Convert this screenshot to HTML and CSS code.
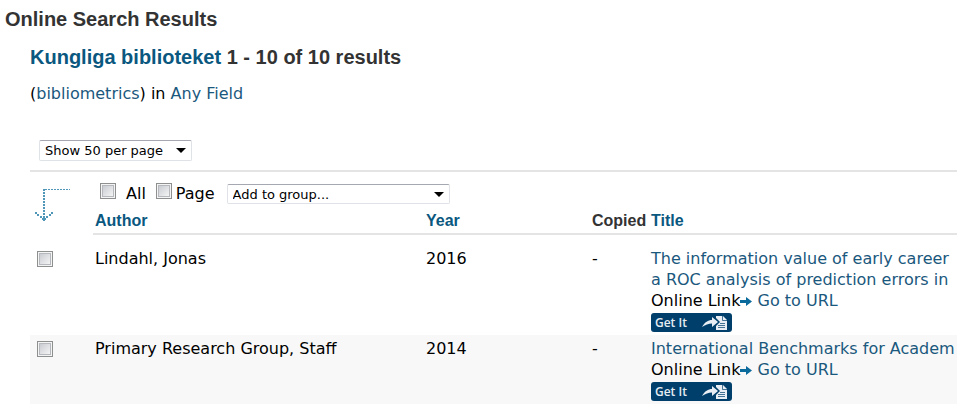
FILE: index.html
```html
<!DOCTYPE html>
<html lang="en">
<head>
    <meta charset="UTF-8">
    <meta name="viewport" content="width=device-width, initial-scale=1.0">
    <title>Online Search Results</title>
    <link rel="stylesheet" href="styles.css">
</head>
<body>
    <svg class="symbols" aria-hidden="true">
        <symbol id="arrow" viewBox="0 0 12 10">
            <path d="M0 4h6V1l6 4.500-6 4.500V7H0z" fill="#0a6a9c"/>
        </symbol>
        <symbol id="share" viewBox="0 0 26 16">
            <path d="M0 12C3 7 6 5 10 5V2l6 5-6 5V8.500C6 8.500 4 10 0 12z" fill="#e8eef3"/>
            <path d="M14 1h7l4 4v10H14v-4l4-4-4-4z" fill="#e8eef3"/>
            <path d="M20.500 1v4.500H25M18 8.500h5M16 10.500h7M16 12.500h7" fill="none" stroke="#003f6b" stroke-opacity="0.7"/>
        </symbol>
    </svg>

    <h1>Online Search Results</h1>

    <div class="content">
        <h2><a href="#">Kungliga biblioteket</a> 1 - 10 of 10 results</h2>
        <p class="query">(<a href="#">bibliometrics</a>) in <a href="#">Any Field</a></p>

        <select class="per-page" aria-label="Results per page">
            <option>Show 50 per page</option>
        </select>

        <table class="results">
            <colgroup>
                <col class="col-check">
                <col class="col-author">
                <col class="col-year">
                <col class="col-copied">
                <col>
            </colgroup>
            <thead>
                <tr>
                    <td class="pointer" rowspan="2">
                        <svg width="38" height="38" viewBox="0 0 38 38" fill="none" stroke="#4f96b8">
                            <path d="M12 3.500H37" stroke-dasharray="2 1"/>
                            <path d="M11 3V35" stroke-dasharray="2 1" stroke-width="2"/>
                            <path d="M2 27h2M4 29h2M7 31h2M9 33h4M13 31h2M16 29h2M18 27h2" stroke-width="2"/>
                        </svg>
                    </td>
                    <td colspan="4">
                        <div class="tools">
                            <input type="checkbox" id="all">
                            <label class="all" for="all">All</label>
                            <input type="checkbox" id="page">
                            <label for="page">Page</label>
                            <select class="group" aria-label="Group">
                                <option>Add to group...</option>
                            </select>
                        </div>
                    </td>
                </tr>
                <tr>
                    <th><a href="#">Author</a></th>
                    <th><a href="#">Year</a></th>
                    <th>Copied</th>
                    <th><a href="#">Title</a></th>
                </tr>
            </thead>
            <tbody>
                <tr>
                    <td class="check"><input type="checkbox" aria-label="Select Lindahl, Jonas"></td>
                    <td>Lindahl, Jonas</td>
                    <td>2016</td>
                    <td>-</td>
                    <td>
                        <a href="#">The information value of early career<br>a ROC analysis of prediction errors in</a><br>
                        Online Link<svg class="arrow"><use href="#arrow"/></svg> <a href="#">Go to URL</a>
                        <button class="get-it" type="button">Get It <svg><use href="#share"/></svg></button>
                    </td>
                </tr>
                <tr>
                    <td class="check"><input type="checkbox" aria-label="Select Primary Research Group, Staff"></td>
                    <td>Primary Research Group, Staff</td>
                    <td>2014</td>
                    <td>-</td>
                    <td>
                        <a href="#">International Benchmarks for Academ</a><br>
                        Online Link<svg class="arrow"><use href="#arrow"/></svg> <a href="#">Go to URL</a>
                        <button class="get-it" type="button">Get It <svg><use href="#share"/></svg></button>
                    </td>
                </tr>
            </tbody>
        </table>
    </div>
</body>
</html>
```

FILE: styles.css
```css
body {
    font-family: Verdana, "DejaVu Sans", sans-serif;
    font-size: 16px;
    line-height: 21px;
    margin: 0;
    padding: 7px 0 0 5px;
    background-color: #fff;
    color: #000;
}

a {
    color: #1a587d;
    text-decoration: none;
}

.symbols {
    display: none;
}

h1, h2, th {
    font-family: Arial, "Liberation Sans", sans-serif;
    color: #333;
}

h1, h2 {
    font-size: 20px;
    line-height: 24px;
    margin: 0;
}

h2 a, th a {
    color: #0a587f;
}

.content {
    padding: 14px 0 0 25px;
}

.query {
    margin: 14px 0 36px;
}

select {
    appearance: none;
    box-sizing: border-box;
    font-family: inherit;
    font-size: 13px;
    color: #000;
    border: 1px solid #dfe2e6;
    border-top-color: #a5a8b0;
    border-radius: 2px;
    padding: 0 5px;
    background: #fff url("data:image/svg+xml,%3Csvg xmlns='http://www.w3.org/2000/svg' width='10' height='5'%3E%3Cpath d='M0 0h10L5 5z'/%3E%3C/svg%3E") no-repeat right 5px center;
}

.per-page {
    display: block;
    width: 153px;
    height: 21px;
    margin: 0 0 9px 9px;
}

input[type="checkbox"] {
    appearance: none;
    box-sizing: border-box;
    width: 16px;
    height: 16px;
    margin: 0;
    border: 1px solid #8e8f8f;
    background: linear-gradient(135deg, #c9ccd2, #f4f4f4) content-box;
    padding: 2px;
    box-shadow: inset 0 0 0 1px #f4f4f4, inset 0 0 0 2px #b5b8bc;
}

.results {
    width: 100%;
    table-layout: fixed;
    border-collapse: separate;
    border-spacing: 0;
    border-top: 2px solid #e4e4e4;
}

.col-check {
    width: 63px;
}

.col-author {
    width: 331px;
}

.col-year {
    width: 166px;
}

.col-copied {
    width: 59px;
}

.results td, .results th {
    padding: 3px 0 3px 2px;
    text-align: left;
    vertical-align: top;
    white-space: nowrap;
}

.results thead td {
    padding-top: 11px;
    padding-bottom: 0;
}

.results th {
    padding: 1px 0 2px 2px;
    border-bottom: 2px solid #e4e4e4;
}

.results thead .pointer {
    padding: 14px 0 0 3px;
}

.pointer svg {
    display: block;
}

.tools {
    display: flex;
    align-items: flex-start;
    height: 26px;
    padding-left: 5px;
}

.tools label {
    margin-left: 4px;
}

.tools .all {
    margin: 0 10px;
}

.group {
    width: 223px;
    height: 20px;
    margin: 1px 0 0 12px;
}

/* space between the header rule and the first row */
.results tbody::before {
    content: "";
    display: block;
    height: 10px;
}

.results tbody tr:nth-child(even) {
    background-color: #f8f8f8;
}

.results .check {
    padding: 6px 0 0 7px;
}

.check input {
    display: block;
}

.arrow {
    width: 12px;
    height: 10px;
}

.get-it {
    display: flex;
    align-items: center;
    justify-content: space-between;
    box-sizing: border-box;
    width: 81px;
    height: 19px;
    margin: 2px 0 0;
    padding: 0 4px;
    border: none;
    border-radius: 3px;
    background-color: #003f6b;
    color: #e6edf2;
    font-family: "Open Sans", sans-serif;
    font-size: 12px;
    font-weight: 600;
    line-height: 18px;
}

.get-it svg {
    width: 26px;
    height: 16px;
}
```
